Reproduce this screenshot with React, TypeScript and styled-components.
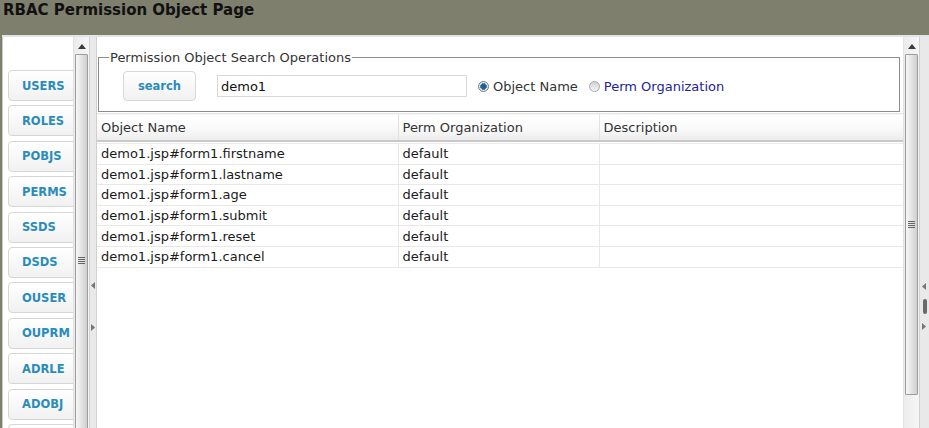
import React from "react";
import styled, { createGlobalStyle } from "styled-components";

const GlobalStyle = createGlobalStyle`
  html, body { margin: 0; padding: 0; }
  body {
    background: #7f7f6d;
    font-family: "DejaVu Sans", Verdana, sans-serif;
    overflow: hidden;
  }
`;

const Page = styled.div`
  width: 929px;
  height: 428px;
  display: flex;
  flex-direction: column;
  overflow: hidden;
`;

const Header = styled.div`
  height: 35px;
  flex: none;
  background: #7f7f6d;
  padding: 0 0 0 3px;
  box-sizing: border-box;
`;

const Title = styled.h1`
  margin: 0;
  font-family: "DejaVu Sans", Verdana, sans-serif;
  font-weight: bold;
  font-size: 15px;
  line-height: 21px;
  color: #111;
`;

const Body = styled.div`
  flex: 1;
  min-height: 0;
  display: flex;
  margin-left: 2px;
  padding-top: 2px;
  background: #e4e4e4;
`;

const West = styled.div`
  width: 86px;
  flex: none;
  display: flex;
  border-left: 1px solid #c8c8c8;
  background: #fff;
`;

const WestContent = styled.div`
  flex: 1;
  overflow: hidden;
  padding-top: 33px;
`;

const NavList = styled.div`
  display: flex;
  flex-direction: column;
  gap: 4.4px;
  padding-left: 5px;
`;

const NavButton = styled.button`
  width: 74px;
  height: 31px;
  flex: none;
  box-sizing: border-box;
  border: 1px solid #d6d6d6;
  border-radius: 4px;
  background: linear-gradient(#ffffff, #f1f1f1);
  text-align: left;
  padding: 0 0 0 13px;
  font-family: "DejaVu Sans", Verdana, sans-serif;
  font-weight: bold;
  font-size: 11.5px;
  color: #2a8cbb;
  cursor: pointer;
`;

const ScrollTrack = styled.div`
  width: 15px;
  flex: none;
  display: flex;
  flex-direction: column;
  overflow: hidden;
  background: linear-gradient(90deg, #ececec, #f6f6f6);
  border-left: 1px solid #e2e2e2;
`;

const ScrollUp = styled.div`
  height: 17px;
  flex: none;
  display: flex;
  align-items: center;
  justify-content: center;
  padding-top: 2px;
  box-sizing: border-box;
`;

const Thumb = styled.div<{ $h: number }>`
  height: ${(p) => p.$h}px;
  flex: none;
  margin: 0 1px;
  box-sizing: border-box;
  border: 1px solid #9c9c9c;
  border-radius: 1px;
  background: linear-gradient(90deg, #f7f7f7 0%, #e6e6e6 45%, #cfcfcf 100%);
  display: flex;
  align-items: center;
  justify-content: center;
`;

const Grip = styled.div`
  width: 7px;
  display: flex;
  flex-direction: column;
  gap: 1px;
  & > span {
    display: block;
    height: 1px;
    background: #666;
  }
`;

const Splitter = styled.div`
  width: 7px;
  flex: none;
  display: flex;
  flex-direction: column;
  align-items: center;
  justify-content: center;
  gap: 35px;
  padding-top: 148px;
  box-sizing: border-box;
  background: #e9e9e9;
  border-left: 1px solid #d4d4d4;
`;

const EastSplitter = styled(Splitter)`
  width: 10px;
  gap: 9px;
  border-left: 1px solid #d0d0d0;
  align-items: flex-start;
  padding-left: 2px;
`;

const SplitGrip = styled.div`
  width: 4px;
  height: 15px;
  border-radius: 2px;
  background: #6a6a6a;
  margin-left: 1px;
`;

const Center = styled.div`
  flex: 1;
  min-width: 0;
  display: flex;
  background: #fff;
  border-left: 1px solid #d0d0d0;
`;

const CenterContent = styled.div`
  flex: 1;
  min-width: 0;
  display: flex;
  flex-direction: column;
`;

const Fieldset = styled.fieldset`
  margin: 13px 3px 0 1px;
  padding: 6px 0 10px 10px;
  border: 1px solid #8c8c8c;
  display: flex;
  align-items: center;
`;

const Legend = styled.legend`
  font-family: "DejaVu Sans", Verdana, sans-serif;
  font-size: 13px;
  color: #333;
  padding: 0 1px;
  margin-left: 0;
`;

const SearchRow = styled.div`
  display: flex;
  align-items: center;
  margin-left: 14px;
`;

const SearchButton = styled(NavButton)`
  width: 73px;
  height: 30px;
  text-align: center;
  padding: 0;
  border-color: #d8d8d8;
`;

const TextInput = styled.input`
  margin-left: 21px;
  width: 250px;
  height: 22px;
  box-sizing: border-box;
  border: 1px solid #d8d8d8;
  padding: 0 3px;
  font-family: "DejaVu Sans", Verdana, sans-serif;
  font-size: 13px;
  color: #111;
  outline: none;
`;

const RadioLabel = styled.label<{ $link?: boolean }>`
  display: flex;
  align-items: center;
  margin-left: 11px;
  font-family: "DejaVu Sans", Verdana, sans-serif;
  font-size: 13px;
  color: ${(p) => (p.$link ? "#23239a" : "#333")};
`;

const RadioDot = styled.span<{ $on?: boolean }>`
  width: 11px;
  height: 11px;
  box-sizing: border-box;
  border-radius: 50%;
  border: 1px solid ${(p) => (p.$on ? "#7a7a7a" : "#a8a8a8")};
  background: ${(p) =>
    p.$on
      ? "radial-gradient(circle at 50% 50%, #1f5f8f 0 2.4px, #4a8cc0 2.6px 3.2px, #e6e6e6 3.4px)"
      : "linear-gradient(#d2d2d2, #f4f4f4)"};
  margin-right: 4px;
  flex: none;
`;

const Table = styled.table`
  margin-top: 1px;
  border-collapse: collapse;
  width: 100%;
  table-layout: fixed;
  font-family: "DejaVu Sans", Verdana, sans-serif;
  font-size: 13px;
`;

const Col = styled.col<{ $w?: number }>`
  width: ${(p) => (p.$w ? `${p.$w}px` : "auto")};
`;

const Th = styled.th`
  height: 26px;
  padding: 0 0 0 4px;
  text-align: left;
  font-weight: normal;
  color: #333;
  background: linear-gradient(#ffffff 0%, #fafafa 50%, #ececec 100%);
  border-top: 1px solid #e6e6e6;
  border-bottom: 2px solid #c9c9c9;
  border-left: 1px solid #e2e2e2;
  &:first-child { border-left: none; }
`;

const Td = styled.td`
  height: 19.6px;
  padding: 0 0 0 4px;
  color: #1a1a1a;
  white-space: nowrap;
  overflow: hidden;
  border-bottom: 1px solid #e8e8e8;
  border-left: 1px solid #e8e8e8;
  &:first-child { border-left: none; }
`;

const FirstRowGap = styled.tr`
  & > td { height: 1px; padding: 0; border-bottom: 1px solid #ececec; }
`;

const Tri = ({ dir }: { dir: "up" | "left" | "right" }) => {
  const pts =
    dir === "up" ? "0,5 4,0 8,5" : dir === "left" ? "4,0 4,7 0,3.5" : "0,0 0,7 4,3.5";
  const w = dir === "up" ? 8 : 4;
  const h = dir === "up" ? 5 : 7;
  return (
    <svg width={w} height={h} viewBox={`0 0 ${w} ${h}`}>
      <polygon points={pts} fill={dir === "up" ? "#3a3a3a" : "#777"} />
    </svg>
  );
};

const ScrollBar = ({ thumb }: { thumb: number }) => (
  <ScrollTrack>
    <ScrollUp>
      <Tri dir="up" />
    </ScrollUp>
    <Thumb $h={thumb}>
      <Grip>
        <span />
        <span />
        <span />
        <span />
      </Grip>
    </Thumb>
  </ScrollTrack>
);

const navItems = ["USERS", "ROLES", "POBJS", "PERMS", "SSDS", "DSDS", "OUSER", "OUPRM", "ADRLE", "ADOBJ"];

const rows = [
  "demo1.jsp#form1.firstname",
  "demo1.jsp#form1.lastname",
  "demo1.jsp#form1.age",
  "demo1.jsp#form1.submit",
  "demo1.jsp#form1.reset",
  "demo1.jsp#form1.cancel",
];

export default function App() {
  return (
    <>
      <GlobalStyle />
      <Page>
        <Header>
          <Title>RBAC Permission Object Page</Title>
        </Header>
        <Body>
          <West>
            <WestContent>
              <NavList>
                {navItems.map((n) => (
                  <NavButton key={n}>{n}</NavButton>
                ))}
                <NavButton aria-hidden />
              </NavList>
            </WestContent>
            <ScrollBar thumb={412} />
          </West>
          <Splitter>
            <Tri dir="left" />
            <Tri dir="right" />
          </Splitter>
          <Center>
            <CenterContent>
              <Fieldset>
                <Legend>Permission Object Search Operations</Legend>
                <SearchRow>
                  <SearchButton>search</SearchButton>
                  <TextInput defaultValue="demo1" />
                  <RadioLabel>
                    <RadioDot $on />
                    Object Name
                  </RadioLabel>
                  <RadioLabel $link>
                    <RadioDot />
                    Perm Organization
                  </RadioLabel>
                </SearchRow>
              </Fieldset>
              <Table>
                <colgroup>
                  <Col $w={301} />
                  <Col $w={201} />
                  <Col />
                </colgroup>
                <thead>
                  <tr>
                    <Th>Object Name</Th>
                    <Th>Perm Organization</Th>
                    <Th>Description</Th>
                  </tr>
                </thead>
                <tbody>
                  <FirstRowGap>
                    <td />
                    <td />
                    <td />
                  </FirstRowGap>
                  {rows.map((r) => (
                    <tr key={r}>
                      <Td>{r}</Td>
                      <Td>default</Td>
                      <Td />
                    </tr>
                  ))}
                </tbody>
              </Table>
            </CenterContent>
            <ScrollBar thumb={341} />
          </Center>
          <EastSplitter>
            <Tri dir="left" />
            <SplitGrip />
            <Tri dir="right" />
          </EastSplitter>
        </Body>
      </Page>
    </>
  );
}
